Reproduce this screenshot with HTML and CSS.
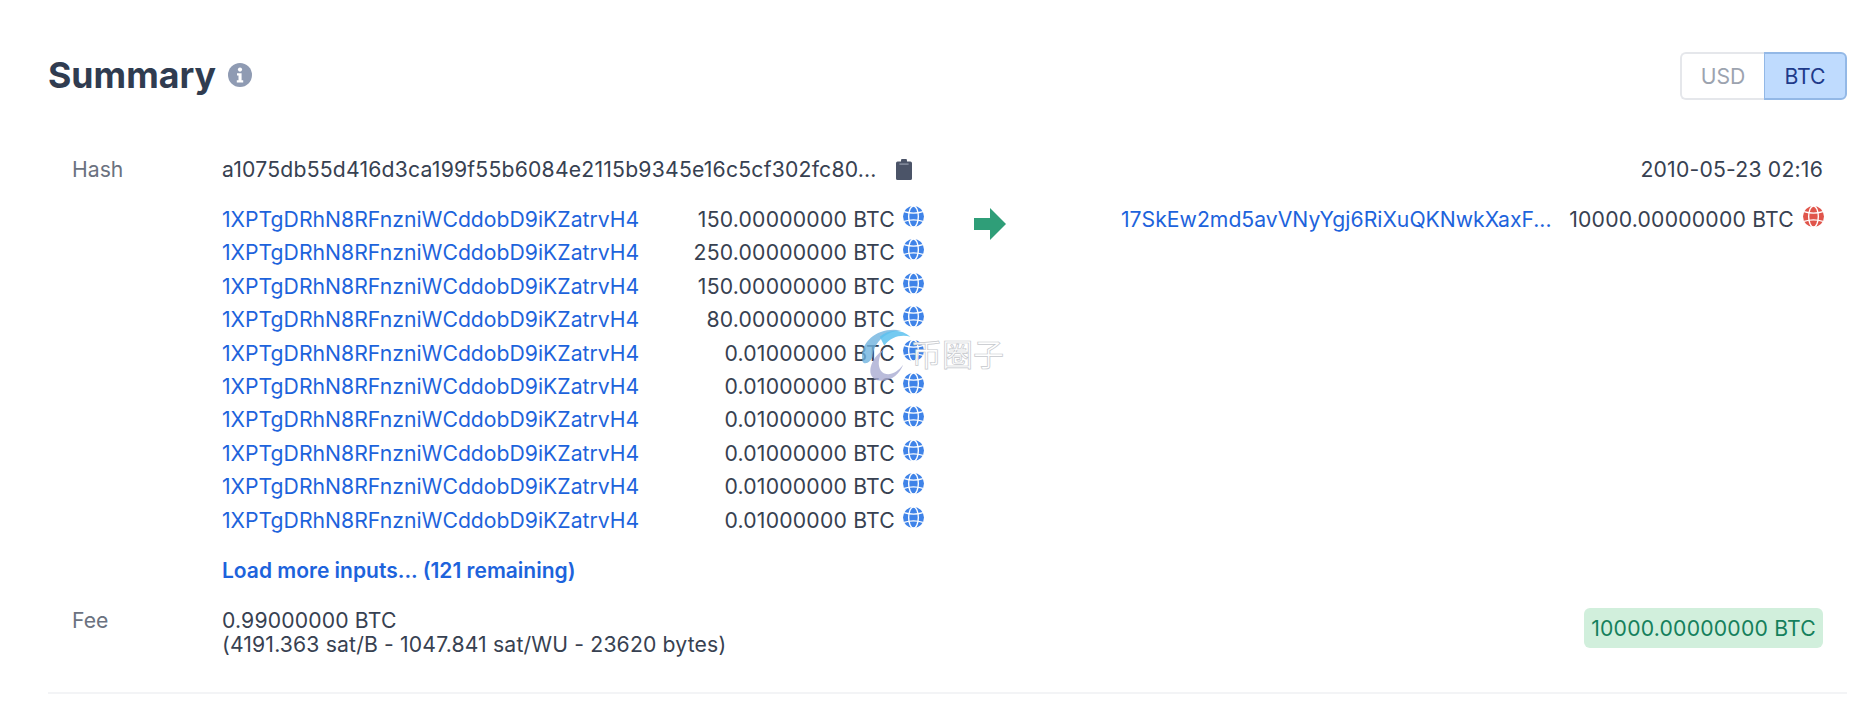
FILE: index.html
```html
<!DOCTYPE html>
<html lang="en">
<head>
<meta charset="utf-8">
<title>Summary</title>
<link rel="stylesheet" href="styles.css">
</head>
<body>
<svg class="defs" width="0" height="0" aria-hidden="true">
  <symbol id="globe" viewBox="0 0 20 20">
    <circle cx="10" cy="10" r="10" fill="currentColor"/>
    <g fill="none" stroke="#fff" stroke-width="1.3">
      <ellipse cx="10" cy="10" rx="4.6" ry="10"/>
      <path d="M1 5.4Q10 8.2 19 5.4M1 14.6Q10 11.8 19 14.6"/>
    </g>
  </symbol>
</svg>
<main class="page">
  <header class="head">
    <div class="title-wrap">
      <h1 class="title">Summary</h1>
      <svg class="info" viewBox="0 0 24 24"><circle cx="12" cy="12" r="12" fill="#8f9bb3"/><circle cx="12" cy="6.6" r="2.1" fill="#fff"/><path d="M9 10.2h4.6v7h1.6v2.2H8.8v-2.2h1.7v-4.8H9z" fill="#fff"/></svg>
    </div>
    <div class="toggle">
      <span class="tog tog-off">USD</span>
      <span class="tog tog-on">BTC</span>
    </div>
  </header>

  <section class="hash-row">
    <span class="label">Hash</span>
    <span class="hash num">a1075db55d416d3ca199f55b6084e2115b9345e16c5cf302fc80...</span>
    <svg class="clip" viewBox="0 0 16 21"><path d="M1.6 2.6H5V2a3 3 0 0 1 6 0v.6h3.4A1.6 1.6 0 0 1 16 4.2v15.2a1.6 1.6 0 0 1-1.6 1.6H1.6A1.6 1.6 0 0 1 0 19.4V4.2a1.6 1.6 0 0 1 1.6-1.6z" fill="#4b5468"/><rect x="3.4" y="4.4" width="9.2" height="1.4" fill="#8a92a3"/></svg>
    <span class="date num">2010-05-23 02:16</span>
  </section>

  <section class="flow">
    <div class="inputs">
      <div class="io"><a class="addr">1XPTgDRhN8RFnzniWCddobD9iKZatrvH4</a><span class="amt num">150.00000000 BTC</span><svg class="globe g-blue"><use href="#globe"/></svg></div>
      <div class="io"><a class="addr">1XPTgDRhN8RFnzniWCddobD9iKZatrvH4</a><span class="amt num">250.00000000 BTC</span><svg class="globe g-blue"><use href="#globe"/></svg></div>
      <div class="io"><a class="addr">1XPTgDRhN8RFnzniWCddobD9iKZatrvH4</a><span class="amt num">150.00000000 BTC</span><svg class="globe g-blue"><use href="#globe"/></svg></div>
      <div class="io"><a class="addr">1XPTgDRhN8RFnzniWCddobD9iKZatrvH4</a><span class="amt num">80.00000000 BTC</span><svg class="globe g-blue"><use href="#globe"/></svg></div>
      <div class="io"><a class="addr">1XPTgDRhN8RFnzniWCddobD9iKZatrvH4</a><span class="amt num">0.01000000 BTC</span><svg class="globe g-blue"><use href="#globe"/></svg></div>
      <div class="io"><a class="addr">1XPTgDRhN8RFnzniWCddobD9iKZatrvH4</a><span class="amt num">0.01000000 BTC</span><svg class="globe g-blue"><use href="#globe"/></svg></div>
      <div class="io"><a class="addr">1XPTgDRhN8RFnzniWCddobD9iKZatrvH4</a><span class="amt num">0.01000000 BTC</span><svg class="globe g-blue"><use href="#globe"/></svg></div>
      <div class="io"><a class="addr">1XPTgDRhN8RFnzniWCddobD9iKZatrvH4</a><span class="amt num">0.01000000 BTC</span><svg class="globe g-blue"><use href="#globe"/></svg></div>
      <div class="io"><a class="addr">1XPTgDRhN8RFnzniWCddobD9iKZatrvH4</a><span class="amt num">0.01000000 BTC</span><svg class="globe g-blue"><use href="#globe"/></svg></div>
      <div class="io"><a class="addr">1XPTgDRhN8RFnzniWCddobD9iKZatrvH4</a><span class="amt num">0.01000000 BTC</span><svg class="globe g-blue"><use href="#globe"/></svg></div>
      <a class="more">Load more inputs... (121 remaining)</a>
    </div>
    <svg class="arrow" viewBox="0 0 32 32"><path d="M0 10h16V0l16 16-16 16V22H0z" fill="#2f9e78"/></svg>
    <div class="outputs">
      <div class="io"><a class="addr">17SkEw2md5avVNyYgj6RiXuQKNwkXaxF...</a><span class="amt num">10000.00000000 BTC</span><svg class="globe g-red"><use href="#globe"/></svg></div>
    </div>
  </section>

  <section class="fee-row">
    <span class="label">Fee</span>
    <div class="fee num-fee">0.99000000 BTC<br>(4191.363 sat/B - 1047.841 sat/WU - 23620 bytes)</div>
    <span class="total num">10000.00000000 BTC</span>
  </section>
</main>

<div class="mark">
  <svg class="mark-logo" viewBox="0 0 60 60">
    <path d="M3 40C-2 20 18 0 46 5 30 5 15 18 14 34c-1 5-8 10-11 6z" fill="#6fb3de" opacity=".8"/>
    <path d="M22 12C32 3 46 3 56 12 46 9 34 12 27 22z" fill="#5cc1ee" opacity=".85"/>
    <path d="M18 60C6 54 12 36 26 26 18 38 20 50 28 53c6 2 14-2 20-10-4 11-16 21-30 17z" fill="#a9abd2" opacity=".8"/>
  </svg>
  <span class="mark-text">币圈子</span>
</div>
</body>
</html>
```
FILE: styles.css
```css
* { box-sizing: border-box; }
html, body { margin: 0; padding: 0; background: #fff; }
body {
  width: 1869px;
  height: 706px;
  overflow: hidden;
  position: relative;
  font-family: Inter, "Liberation Sans", sans-serif;
  font-size: 21.2px;
  line-height: 25px;
  color: #374151;
}
.num { letter-spacing: .2px; }
.num-fee { letter-spacing: .15px; }
.defs { position: absolute; }
.page { padding: 0 22px 0 48px; }
.head {
  display: flex;
  justify-content: space-between;
  align-items: center;
  padding-top: 51px;
  height: 101px;
}
.title-wrap { display: flex; align-items: center; gap: 12px; margin-top: -2px; }
.title { margin: 0; font-size: 35.7px; line-height: 48px; font-weight: 700; color: #303c50; }
.info { width: 24px; height: 24px; }
.toggle { display: flex; height: 48px; }
.tog { display: flex; align-items: center; justify-content: center; border: 2px solid; }
.tog-off { width: 84px; color: #9ca3af; border-color: #e5e7eb; border-right: 0; border-radius: 6px 0 0 6px; }
.tog-on { width: 83px; color: #1e3a8a; background: #bfdbfe; border-color: #93b8e6; border-left-width: 1px; border-radius: 0 6px 6px 0; }

.hash-row { display: flex; align-items: center; margin-top: 55px; padding: 0 24px 0 24px; height: 26px; }
.label { width: 150px; color: #6b7280; flex: none; }
.hash { flex: none; }
.clip { width: 16px; height: 21px; margin-left: 19px; flex: none; }
.date { margin-left: auto; }

.flow { display: flex; padding: 0 24px 0 174px; margin-top: 25px; }
.inputs { width: 703px; flex: none; }
.io { display: flex; height: 33.4px; align-items: flex-start; }
.addr { color: #1d63dc; white-space: nowrap; }
.amt { margin-left: auto; white-space: nowrap; }
.globe { width: 21px; height: 21px; margin: -1px -1px 0 9px; flex: none; }
.g-blue { color: #3f83e8; margin: -1px 1px 0 8px; }
.g-red { color: #e0554b; }
.more { display: block; margin-top: 17px; color: #1d63dc; font-weight: 600; font-size: 21px; }
.arrow { width: 32px; height: 32px; margin: 1px 0 0 49px; flex: none; }
.outputs { flex: 1; margin-left: 115px; }

.fee-row { display: flex; align-items: flex-start; margin-top: 25px; line-height: 24px; padding: 0 24px 36px 24px; border-bottom: 2px solid #f3f4f6; }
.fee { flex: 1; }
.total { padding: 8px 7px; background: #d1efdc; color: #15805c; border-radius: 6px; }

.mark { position: absolute; left: 860px; top: 322px; display: flex; align-items: center; }
.mark-logo { width: 54px; height: 62px; }
.mark-text {
  font-family: "Noto Sans CJK SC", sans-serif;
  font-size: 31px;
  line-height: 32px;
  color: #fff;
  -webkit-text-stroke: .7px #c4c7cc;
  margin-left: -3px;
}
```
